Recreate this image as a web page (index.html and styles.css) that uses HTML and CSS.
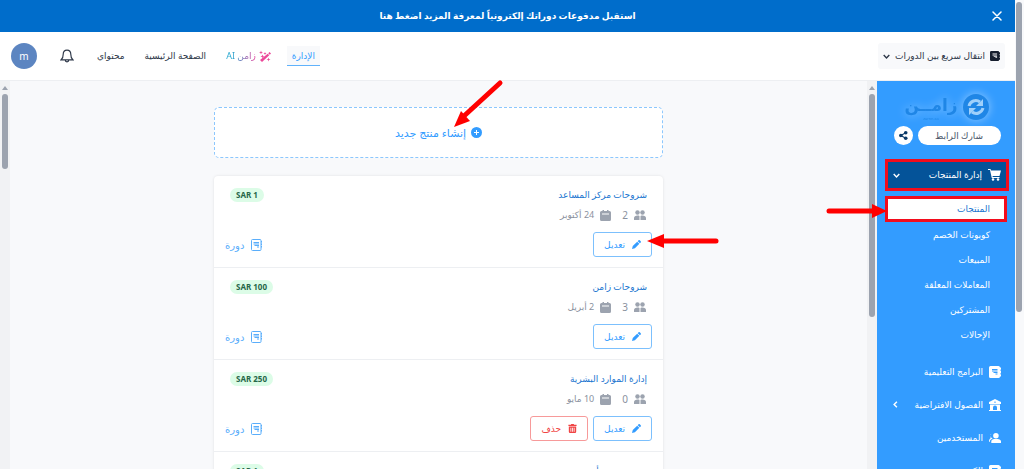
FILE: index.html
```html
<!DOCTYPE html>
<html lang="ar" dir="rtl">
<head>
  <meta charset="UTF-8">
  <meta name="viewport" content="width=device-width, initial-scale=1">
  <title>زامن - المنتجات</title>
  <link rel="stylesheet" href="styles.css">
</head>
<body>
  <!-- Shared icons -->
  <svg class="sprite" aria-hidden="true">
    <symbol id="i-users" viewBox="0 0 24 20">
      <circle cx="7" cy="5" r="4.500"/><circle cx="17" cy="5" r="4.500"/>
      <path d="M0 20v-4c0-3 3-5 7-5 1.600 0 3 .3 4 .9V20zM13 20v-8.100c1-.6 2.400-.9 4-.9 4 0 7 2 7 5v4z"/>
    </symbol>
    <symbol id="i-calendar" viewBox="0 0 22 22">
      <path d="M5 0h3v2h6V0h3v2h2a3 3 0 0 1 3 3v14a3 3 0 0 1-3 3H3a3 3 0 0 1-3-3V5a3 3 0 0 1 3-3h2zM4 7v2h14V7z" fill-rule="evenodd"/>
    </symbol>
    <symbol id="i-pencil" viewBox="0 0 20 20">
      <path d="M14.500.8a2 2 0 0 1 2.800 0l2 2a2 2 0 0 1 0 2.800L17.500 7.400 12.700 2.600zM11.500 3.800l4.800 4.800L6.500 18.300 0 20l1.700-6.500z"/>
    </symbol>
    <symbol id="i-trash" viewBox="0 0 20 22">
      <path d="M7 0h6l1 2h6v3H0V2h6zM1 6h18v13a3 3 0 0 1-3 3H4a3 3 0 0 1-3-3zM5 9v10h2V9zM9 9v10h2V9zM13 9v10h2V9z" fill-rule="evenodd"/>
    </symbol>
    <symbol id="i-course" viewBox="0 0 22 24">
      <rect x="1" y="1" width="19" height="22" rx="2" fill="none" stroke="currentColor" stroke-width="2"/>
      <path d="M5 6h11v2H5zM5 9h11v2H5zM7 12h9v2H7zM12 15h4v2h-4zM20 4h2v3h-2zM20 9h2v3h-2zM20 14h2v3h-2z"/>
    </symbol>
    <symbol id="i-book" viewBox="0 0 24 24">
      <path d="M3 0h16a3 3 0 0 1 3 3h2v4h-1v3h1v4h-1v3h1v4h-2a3 3 0 0 1-3 3H3a3 3 0 0 1-3-3V3a3 3 0 0 1 3-3zM6 6v2h11V6zM6 9v2h11V9zM9 12v2h8v-2zM13 15v2h4v-2z" fill-rule="evenodd"/>
    </symbol>
  </svg>

  <div class="scrollbar page-scroll" aria-hidden="true"></div>

  <div class="page">
    <div class="banner">
      <a href="#">استقبل مدفوعات دوراتك إلكترونياً لمعرفة المزيد اضغط هنا</a>
      <button class="banner-close" aria-label="إغلاق">
        <svg viewBox="0 0 10 10"><path d="M1 1l8 8M9 1l-8 8" fill="none" stroke="currentColor" stroke-width="1.500" stroke-linecap="round"/></svg>
      </button>
    </div>

    <header class="navbar">
      <button class="switcher">
        <svg class="icon-book" viewBox="0 0 24 24"><use href="#i-book"/></svg>
        انتقال سريع بين الدورات
        <svg class="chevron" viewBox="0 0 10 6"><path d="M1 1l4 4 4-4"/></svg>
      </button>
      <nav class="nav-links">
        <a class="active" href="#">الإدارة</a>
        <a class="ai-link" href="#">
          <svg viewBox="0 0 24 24">
            <path d="M17.500 7.500l3 3L6 24l-4-4z"/><path d="M18.500 6.500L21 4l3 3-2.500 2.500z"/>
            <path d="M4 1l1 3 3 1-3 1-1 3-1-3-3-1 3-1zM12 4l.8 2.200L15 7l-2.200.8L12 10l-.8-2.200L9 7l2.200-.8zM7 9l1 2.500L10.500 13 8 14l-1 3-1-3-3-1 3-1.500zM19 15l1 3 3 1-3 1-1 3-1-3-3-1 3-1z"/>
          </svg>
          <span>زامن AI</span>
        </a>
        <a href="#">الصفحة الرئيسية</a>
        <a href="#">محتواي</a>
        <button class="bell" aria-label="الإشعارات">
          <svg viewBox="0 0 24 24"><path d="M12 2c-4 0-6.500 3-6.500 7 0 6-1 7.500-3.500 9.500h20c-2.500-2-3.500-3.500-3.500-9.500 0-4-2.500-7-6.500-7zM9 19c0 4 6 4 6 0"/></svg>
        </button>
        <button class="avatar" aria-label="الحساب">m</button>
      </nav>
    </header>

    <div class="body">
      <aside class="sidebar">
        <div class="logo">
          <svg viewBox="0 0 28 28" aria-hidden="true">
            <circle cx="14" cy="14" r="13" fill="#1f86e6"/>
            <g fill="none" stroke="#9fd0fb" stroke-width="3"><path d="M7 13a7 7 0 0 1 11-4"/><path d="M21 15a7 7 0 0 1-11 4"/></g>
            <path d="M21 6v7h-7zM7 22v-7h7z" fill="#9fd0fb"/>
          </svg>
          <div class="logo-text">
            <span class="logo-name">زامــن</span>
            <span class="logo-site">zamn.sa</span>
          </div>
        </div>
        <div class="share">
          <button class="share-link">شارك الرابط</button>
          <button class="share-icon" aria-label="مشاركة">
            <svg viewBox="0 0 20 20"><circle cx="4" cy="10" r="4"/><circle cx="15" cy="4" r="4"/><circle cx="15" cy="16" r="4"/><path d="M4 10l11-6M4 10l11 6" stroke="currentColor" stroke-width="2.500"/></svg>
          </button>
        </div>

        <nav class="menu">
          <a class="menu-item open marked" href="#">
            <svg viewBox="0 0 26 24"><path d="M0 0h5l1 3h20l-3 11H9l.5 2H23v2H7.500L4 2H0z"/><circle cx="10" cy="21" r="2.500"/><circle cx="20" cy="21" r="2.500"/></svg>
            إدارة المنتجات
            <svg class="chevron" viewBox="0 0 10 6"><path d="M1 1l4 4 4-4"/></svg>
          </a>
          <div class="submenu">
            <a class="current marked" href="#">المنتجات</a>
            <a href="#">كوبونات الخصم</a>
            <a href="#">المبيعات</a>
            <a href="#">المعاملات المعلقة</a>
            <a href="#">المشتركين</a>
            <a href="#">الإحالات</a>
          </div>
          <a class="menu-item" href="#">
            <svg viewBox="0 0 24 24"><use href="#i-book"/></svg>
            البرامج التعليمية
          </a>
          <a class="menu-item" href="#">
            <svg viewBox="0 0 24 24"><path d="M12 0l12 6v4H0V6zM11 5h2v3h-2zM2 11h20v11h2v2H0v-2h2zM8 22h8v-5a4 4 0 0 0-8 0z" fill-rule="evenodd"/></svg>
            الفصول الافتراضية
            <svg class="chevron side" viewBox="0 0 6 10"><path d="M5 1L1 5l4 4"/></svg>
          </a>
          <a class="menu-item" href="#">
            <svg viewBox="0 0 26 22"><circle cx="15" cy="6" r="6"/><path d="M5 22v-4c0-4 4-5 10-5s11 1 11 5v4zM7 1a5 5 0 0 0 1 10l-2 2c-3 1-4 3-4 6H0c0-4 1-6 4-8C1 7 3 2 7 1z"/></svg>
            المستخدمين
          </a>
          <a class="menu-item" href="#">
            <svg viewBox="0 0 24 24"><use href="#i-book"/></svg>
            الكتب
          </a>
        </nav>
      </aside>
      <div class="scroll-track" aria-hidden="true"><div class="scrollbar side-thumb"></div></div>

      <main class="content">
        <div class="column">
          <a class="create" href="#">
            <svg viewBox="0 0 22 22"><path d="M11 0a11 11 0 1 0 0 22 11 11 0 0 0 0-22zM10 6h2v4h4v2h-4v4h-2v-4H6v-2h4z" fill-rule="evenodd"/></svg>
            إنشاء منتج جديد
          </a>

          <div class="products">
            <article class="product">
              <div class="row info">
                <a class="title" href="#">شروحات مركز المساعد</a>
                <span class="price" dir="ltr">SAR 1</span>
              </div>
              <div class="meta">
                <svg class="i-users"><use href="#i-users"/></svg><span class="count">2</span>
                <svg class="i-cal"><use href="#i-calendar"/></svg><span>24 أكتوبر</span>
              </div>
              <div class="row">
                <div class="actions"><button class="btn"><svg><use href="#i-pencil"/></svg>تعديل</button></div>
                <span class="type"><svg><use href="#i-course"/></svg>دورة</span>
              </div>
            </article>

            <article class="product">
              <div class="row info">
                <a class="title" href="#">شروحات زامن</a>
                <span class="price" dir="ltr">SAR 100</span>
              </div>
              <div class="meta">
                <svg class="i-users"><use href="#i-users"/></svg><span class="count">3</span>
                <svg class="i-cal"><use href="#i-calendar"/></svg><span>2 أبريل</span>
              </div>
              <div class="row">
                <div class="actions"><button class="btn"><svg><use href="#i-pencil"/></svg>تعديل</button></div>
                <span class="type"><svg><use href="#i-course"/></svg>دورة</span>
              </div>
            </article>

            <article class="product">
              <div class="row info">
                <a class="title" href="#">إدارة الموارد البشرية</a>
                <span class="price" dir="ltr">SAR 250</span>
              </div>
              <div class="meta">
                <svg class="i-users"><use href="#i-users"/></svg><span class="count">0</span>
                <svg class="i-cal"><use href="#i-calendar"/></svg><span>10 مايو</span>
              </div>
              <div class="row">
                <div class="actions">
                  <button class="btn"><svg><use href="#i-pencil"/></svg>تعديل</button>
                  <button class="btn danger"><svg><use href="#i-trash"/></svg>حذف</button>
                </div>
                <span class="type"><svg><use href="#i-course"/></svg>دورة</span>
              </div>
            </article>

            <article class="product">
              <div class="row info">
                <a class="title" href="#">دورة تجريبية أ</a>
                <span class="price" dir="ltr">SAR 1</span>
              </div>
            </article>
          </div>
        </div>
      </main>
      <div class="scroll-track" aria-hidden="true"><div class="scrollbar main-thumb"></div></div>
    </div>
  </div>

  <!-- Tutorial arrows over the page -->
  <svg class="arrows" viewBox="0 0 1024 469" aria-hidden="true">
    <g stroke="#f00" stroke-width="5" stroke-linecap="round">
      <path d="M500 83l-36 33"/><path d="M716 241h-54"/><path d="M829 211h46"/>
    </g>
    <g fill="#f00">
      <path d="M454 127l7-16 9 10z"/><path d="M647 241l17-7v14z"/><path d="M887 211l-15-7v14z"/>
    </g>
  </svg>
</body>
</html>
```
FILE: styles.css
```css
* {
  box-sizing: border-box;
}

body {
  margin: 0;
  height: 100vh;
  display: flex;
  overflow: hidden;
  background: #f8f9fb;
  color: #2d3748;
  font-family: "Noto Sans", "DejaVu Sans", sans-serif;
  font-size: 9px;
  line-height: 16px;
}

a {
  color: inherit;
  text-decoration: none;
}

button {
  padding: 0;
  border: none;
  background: none;
  color: inherit;
  font: inherit;
  cursor: pointer;
}

svg {
  display: block;
  flex: none;
  fill: currentColor;
}

.sprite {
  position: absolute;
  width: 0;
  height: 0;
}

.page {
  flex: 1;
  min-width: 0;
  display: flex;
  flex-direction: column;
}

/* Scrollbars */
.scrollbar {
  width: 6px;
  border-radius: 3px;
  background: #9ca3af;
}
.page-scroll {
  height: 310px;
  margin: 2px 2px 0 1px;
}
.scroll-track {
  width: 10px;
  flex: none;
  padding: 5px 2px;
  background: #f1f2f4;
}
.scroll-track::before {
  content: "";
  display: block;
  border: 3px solid transparent;
  border-top: none;
  border-bottom: 4px solid #9ca3af;
  margin-bottom: 4px;
}
.side-thumb {
  height: 223px;
}
.main-thumb {
  height: 75px;
}

/* Top banner */
.banner {
  height: 32px;
  flex: none;
  display: flex;
  align-items: center;
  justify-content: center;
  position: relative;
  background: #006dcb;
  color: #fff;
  font-weight: bold;
}
.banner-close {
  position: absolute;
  right: 12px;
  padding: 1px;
}
.banner-close svg {
  width: 10px;
  height: 10px;
}

/* Navbar */
.navbar {
  height: 49px;
  flex: none;
  display: flex;
  align-items: center;
  justify-content: space-between;
  padding: 0 10px 0 11px;
  background: #fff;
  border-bottom: 1px solid #edeff2;
}
.switcher {
  height: 26px;
  display: flex;
  align-items: center;
  gap: 5px;
  padding: 0 5px;
  border-radius: 3px;
  background: #f8f9fb;
}
.icon-book {
  width: 10px;
  height: 10px;
  color: #161e2e;
}
.chevron {
  width: 7px;
  height: 5px;
}
.chevron path {
  fill: none;
  stroke: currentColor;
  stroke-width: 2;
}
.chevron.side {
  width: 5px;
  height: 7px;
}
.nav-links {
  display: flex;
  align-items: center;
  gap: 20px;
}
.nav-links .active {
  padding: 2px 5px 1px;
  background: #f8f9fb;
  border-bottom: 1px solid #60b2fb;
  color: #339cff;
}
.ai-link {
  display: flex;
  align-items: center;
  gap: 3px;
}
.nav-links .active + .ai-link {
  margin-right: -4px;
}
.ai-link svg {
  width: 12px;
  height: 12px;
  color: #ec4899;
}
.ai-link span {
  background: linear-gradient(to left, #e83e9c, #22a6cf 80%);
  background-clip: text;
  color: transparent;
}
.bell {
  margin: 0 3px;
}
.bell svg {
  width: 14px;
  height: 14px;
  fill: none;
  stroke: currentColor;
  stroke-width: 2;
}
.avatar {
  width: 26px;
  height: 26px;
  border-radius: 50%;
  background: #5c85c1;
  color: #fff;
  font-size: 10px;
}

/* Main area */
.body {
  flex: 1;
  min-height: 0;
  display: flex;
  overflow: hidden;
}
.sidebar {
  flex: 0 0 138px;
  padding: 10px 6px 0 8px;
  background: #339cff;
  color: #fff;
}
.logo {
  display: flex;
  align-items: center;
  justify-content: center;
  gap: 4px;
  height: 32px;
  color: #1f86e6;
  filter: drop-shadow(0 0 5px #8fc8ff);
}
.logo svg {
  width: 28px;
  height: 28px;
}
.logo-text {
  display: flex;
  flex-direction: column;
  text-align: center;
}
.logo-name {
  font-size: 17px;
  font-weight: bold;
  line-height: 24px;
}
.logo-site {
  font-size: 4px;
  line-height: 4px;
}
.share {
  display: flex;
  justify-content: center;
  gap: 5px;
  margin-top: 3px;
}
.share-link {
  width: 83px;
  height: 19px;
  border-radius: 10px;
  background: #fff;
  color: #4a5568;
}
.share-icon {
  width: 19px;
  height: 19px;
  border-radius: 50%;
  background: #fff;
  color: #0b3a68;
}
.share-icon svg {
  width: 9px;
  height: 9px;
  margin: auto;
}
.menu {
  margin-top: 14px;
}
.menu-item {
  display: flex;
  align-items: center;
  gap: 6px;
  height: 33px;
  padding: 0 8px;
}
.menu-item svg:first-child {
  width: 12px;
  height: 12px;
}
.menu-item .chevron {
  margin-right: auto;
}
.marked {
  border: 3px solid #f30c1c;
}
.menu-item.open {
  height: 32px;
  padding: 0 5px;
  background: #045399;
}
.menu-item.open svg:first-child {
  width: 13px;
}
.submenu {
  padding: 5px 0 8px;
}
.submenu a {
  display: block;
  padding: 5px 19px 4px;
}
.submenu .current {
  margin-right: 2px;
  padding: 2px 14px;
  background: #fff;
  color: #1a75cf;
}

/* Product list */
.content {
  flex: 1;
  min-width: 0;
  padding: 26px 20px 0;
}
.column {
  max-width: 449px;
  margin: 0 auto;
}
.create {
  height: 51px;
  display: flex;
  align-items: center;
  justify-content: center;
  gap: 5px;
  border: 1px dashed #8cc7fd;
  border-radius: 5px;
  background: #fff;
  color: #339cff;
  font-size: 11px;
}
.create svg {
  width: 11px;
  height: 11px;
}
.products {
  margin-top: 18px;
  border-radius: 4px;
  background: #fff;
  box-shadow: 0 0 3px rgba(0, 0, 0, 0.1);
}
.product {
  padding: 11px 11px 10px;
  border-bottom: 1px solid #edeff2;
}
.row {
  display: flex;
  align-items: center;
  justify-content: space-between;
}
.info {
  padding: 0 5px;
}
.title {
  color: #1a75cf;
}
.price {
  padding: 0 6px;
  border-radius: 7px;
  background: #dcfce7;
  color: #276749;
  font-size: 8px;
  font-weight: bold;
  line-height: 14px;
}
.meta {
  display: flex;
  align-items: center;
  gap: 6px;
  margin: 4px 0 9px;
  padding: 0 6px;
  color: #8a919e;
}
.meta svg {
  color: #9ca3af;
}
.count {
  margin-left: 5px;
  font-size: 10px;
}
.i-users {
  width: 12px;
  height: 10px;
}
.i-cal {
  width: 11px;
  height: 11px;
}
.actions {
  display: flex;
  gap: 5px;
}
.btn {
  height: 25px;
  display: flex;
  align-items: center;
  gap: 7px;
  padding: 0 10px;
  border: 1px solid #7cc0fd;
  border-radius: 3px;
  color: #339cff;
}
.btn svg {
  width: 9px;
  height: 9px;
}
.btn.danger {
  border-color: #f79a9a;
  color: #f04444;
}
.type {
  display: flex;
  align-items: center;
  gap: 7px;
  color: #5aaefb;
  font-size: 10px;
}
.type svg {
  width: 11px;
  height: 12px;
}

/* Arrows drawn on top of the page */
.arrows {
  position: absolute;
  top: 0;
  left: 0;
  width: 1024px;
  height: 469px;
  pointer-events: none;
}
```
